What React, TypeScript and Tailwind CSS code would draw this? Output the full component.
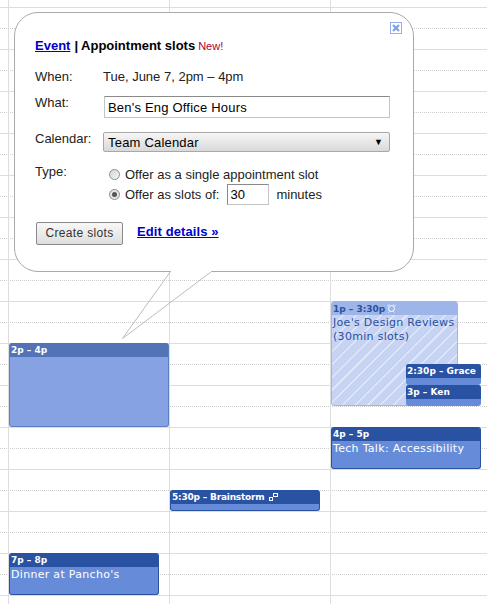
import React from "react";

const hours = Array.from({ length: 15 }, (_, i) => i);

function GridBackground() {
  return (
    <div className="absolute inset-0 flex flex-col">
      <div className="h-[8px] shrink-0 border-b border-[#dddddd]" />
      {hours.map((h) => (
        <div key={h} className="h-[42px] shrink-0 border-b border-[#dddddd]">
          <div className="h-[21px] border-b border-dotted border-[#cfcfcf]" />
        </div>
      ))}
    </div>
  );
}

function Columns() {
  return (
    <div className="absolute inset-0 flex pl-[8px]">
      <div className="h-full w-[161px] shrink-0 border-l border-[#dddddd]" />
      <div className="h-full w-[161px] shrink-0 border-l border-[#dddddd]" />
      <div className="h-full flex-1 border-l border-[#dddddd]" />
    </div>
  );
}

type EvProps = {
  cls: string;
  head: string;
  body: string;
  time: React.ReactNode;
  title?: React.ReactNode;
};

function CalEvent({ cls, head, body, time, title }: EvProps) {
  return (
    <div className={`absolute flex flex-col overflow-hidden rounded-[3px] ${cls} ${body}`}>
      <div
        className={`flex h-[14px] shrink-0 items-center whitespace-nowrap pl-[1px] font-['DejaVu_Sans'] text-[9px] font-bold leading-[14px] text-white ${head}`}
      >
        {time}
      </div>
      {title && (
        <div className="px-[1px] pt-[1px] font-['DejaVu_Sans'] text-[11px] leading-[14px] tracking-[0.3px] text-white">
          {title}
        </div>
      )}
    </div>
  );
}

function Popup() {
  return (
    <>
      <div className="absolute left-[14px] top-[12px] h-[260px] w-[400px] rounded-[24px] border border-[#aaaaaa] bg-white pl-[20px] pr-[20px] pt-[25px] font-['Liberation_Sans'] text-[13px] leading-[15px] text-[#222222]">
        <svg className="absolute left-[375px] top-[9px]" width="12" height="12" viewBox="0 0 12 12">
          <rect x="0.5" y="0.5" width="11" height="11" fill="#ffffff" stroke="#8fb0ee" />
          <path d="M3 3 L9 9 M9 3 L3 9" stroke="#7f9fe8" strokeWidth="2.2" />
        </svg>

        <div className="flex items-baseline text-[13px] font-bold text-black">
          <a className="text-[#0000cc] underline">Event</a>
          <span className="ml-[4px]">|</span>
          <span className="ml-[3px]">Appointment slots</span>
          <span className="ml-[3px] text-[11px] font-normal text-[#aa0033]">New!</span>
        </div>

        <div className="mt-[15px] flex">
          <div className="w-[68px] shrink-0">When:</div>
          <div>Tue, June 7, 2pm – 4pm</div>
        </div>

        <div className="mt-[11px] flex items-start">
          <div className="w-[69px] shrink-0">What:</div>
          <input
            readOnly
            value="Ben's Eng Office Hours"
            className="mt-[1px] h-[22px] w-[286px] shrink-0 border border-[#c4c4c4] border-t-[#8a8a8a] bg-white px-[3px] font-['Liberation_Sans'] text-[13px] tracking-[0.2px] text-black"
          />
        </div>

        <div className="mt-[13px] flex items-start">
          <div className="w-[68px] shrink-0">Calendar:</div>
          <div className="mt-[1px] flex h-[20px] w-[287px] shrink-0 items-center justify-between rounded-[2px] border border-[#a8a8a8] bg-gradient-to-b from-[#f6f6f6] to-[#d9d9d9] pl-[4px] pr-[6px] text-[13px] tracking-[0.2px] text-black">
            <span>Team Calendar</span>
            <span className="text-[9px] leading-none text-black">▼</span>
          </div>
        </div>

        <div className="mt-[12px] flex items-start">
          <div className="w-[74px] shrink-0">Type:</div>
          <div className="mt-[2px] flex flex-col">
            <div className="flex h-[16px] items-center">
              <span className="mr-[5px] h-[11px] w-[11px] rounded-full border border-[#8f8f8f] bg-gradient-to-br from-[#d5d5d5] to-[#f5f5f5]" />
              Offer as a single appointment slot
            </div>
            <div className="mt-[1px] flex h-[22px] items-center">
              <span className="mr-[5px] flex h-[11px] w-[11px] items-center justify-center rounded-full border border-[#8f8f8f] bg-[#e4e4e4]">
                <span className="h-[5px] w-[5px] rounded-full bg-[#555555]" />
              </span>
              Offer as slots of:
              <input
                readOnly
                value="30"
                className="ml-[8px] h-[21px] w-[42px] border border-[#c4c4c4] border-l-[#8a8a8a] border-t-[#8a8a8a] bg-white px-[2px] font-['Liberation_Sans'] text-[13px] text-black"
              />
              <span className="ml-[7px]">minutes</span>
            </div>
          </div>
        </div>

        <div className="ml-[1px] mt-[17px] flex items-start">
          <button className="h-[23px] w-[87px] rounded-[2px] border border-[#8a8a8a] bg-gradient-to-b from-[#f8f8f8] to-[#dedede] text-center font-['Liberation_Sans'] text-[12px] tracking-[0.35px] text-[#333333]">
            Create slots
          </button>
          <a className="ml-[14px] mt-[2px] text-[13px] font-bold tracking-[0.1px] text-[#0000cc] underline">Edit details »</a>
        </div>
      </div>

      <svg className="absolute left-[115px] top-[265px]" width="105" height="80" viewBox="0 0 105 80">
        <path d="M55.5 6.5 L7.5 73.5 L96.5 6.5" fill="none" stroke="#bdbdbd" strokeWidth="1" />
      </svg>
      <div className="absolute left-[171px] top-[271px] h-[1px] w-[40px] bg-white" />
    </>
  );
}

function AlarmIcon() {
  return (
    <svg className="ml-[2px]" width="9" height="9" viewBox="0 0 9 9" fill="none" stroke="#ffffff" strokeWidth="1">
      <circle cx="4.5" cy="4.5" r="3" />
      <path d="M0.5 2 L2 0.5 M7 0.5 L8.5 2 M1.5 8.5 L2.5 7.5 M7.5 8.5 L6.5 7.5" />
    </svg>
  );
}

function RepeatIcon() {
  return (
    <svg className="ml-[4px]" width="9" height="8" viewBox="0 0 9 8" fill="none" stroke="#ffffff" strokeWidth="1">
      <rect x="0.5" y="4.5" width="3" height="3" />
      <rect x="4.5" y="0.5" width="4" height="3" />
    </svg>
  );
}

export default function App() {
  return (
    <div className="relative h-[604px] w-[487px] overflow-hidden bg-white">
      <GridBackground />
      <Columns />

      <CalEvent
        cls="left-[9px] top-[343px] h-[84px] w-[160px] border-b border-l border-r border-[#5a7fc4]"
        head="bg-[#5273b5]"
        body="bg-[#7f9de0]/95"
        time="2p – 4p"
      />

      <div className="absolute left-[331px] top-[301px] flex h-[105px] w-[127px] flex-col overflow-hidden rounded-[3px] border border-[#a2b6e6] bg-[repeating-linear-gradient(135deg,#c6d3f2_0px,#c6d3f2_7.5px,#dfe6f8_7.5px,#dfe6f8_9px)]">
        <div className="flex h-[13px] shrink-0 items-center whitespace-nowrap bg-[#9db5e8] pl-[1px] font-['DejaVu_Sans'] text-[9px] font-bold leading-[14px] text-[#2952a3]">
          1p – 3:30p
          <AlarmIcon />
        </div>
        <div className="px-[1px] pt-[1px] font-['DejaVu_Sans'] text-[11px] leading-[14px] tracking-[0.3px] text-[#2952a3]">
          Joe's Design Reviews
          <br />
          (30min slots)
        </div>
      </div>

      <CalEvent
        cls="left-[406px] top-[364px] h-[21px] w-[75px]"
        head="bg-[#2952a3]"
        body="bg-[#668cd9]"
        time="2:30p – Grace"
      />
      <CalEvent
        cls="left-[406px] top-[385px] h-[21px] w-[75px]"
        head="bg-[#2952a3]"
        body="bg-[#668cd9]"
        time="3p – Ken"
      />
      <CalEvent
        cls="left-[331px] top-[427px] h-[42px] w-[150px] border-b border-l border-r border-[#2952a3]"
        head="bg-[#2952a3]"
        body="bg-[#668cd9]"
        time="4p – 5p"
        title="Tech Talk: Accessibility"
      />
      <CalEvent
        cls="left-[170px] top-[490px] h-[21px] w-[150px] border-b border-l border-r border-[#2952a3]"
        head="bg-[#2952a3]"
        body="bg-[#668cd9]"
        time={
          <>
            <span className="tracking-[-0.2px]">5:30p – Brainstorm</span>
            <RepeatIcon />
          </>
        }
      />
      <CalEvent
        cls="left-[9px] top-[553px] h-[42px] w-[150px] border-b border-l border-r border-[#2952a3]"
        head="bg-[#2952a3]"
        body="bg-[#668cd9]"
        time="7p – 8p"
        title="Dinner at Pancho's"
      />

      <Popup />
    </div>
  );
}
